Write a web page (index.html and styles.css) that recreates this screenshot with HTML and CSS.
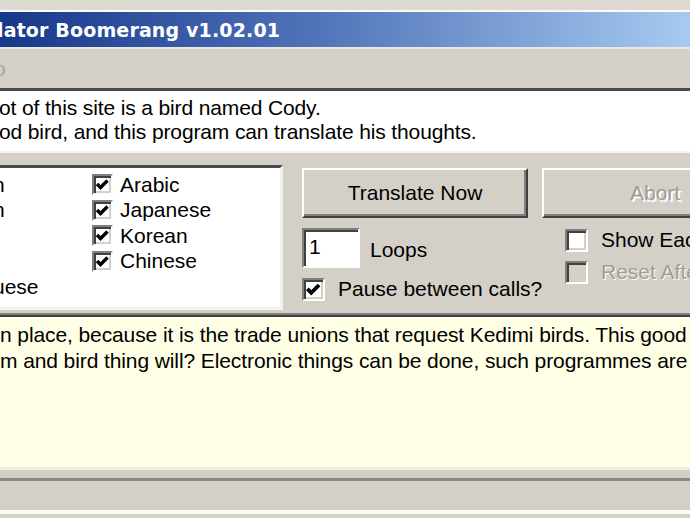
FILE: index.html
```html
<!DOCTYPE html>
<html lang="en">
<head>
  <meta charset="UTF-8">
  <meta name="viewport" content="width=device-width, initial-scale=1.0">
  <title>Translator Boomerang v1.02.01</title>
  <link rel="stylesheet" href="styles.css">
</head>
<body>

  <div class="window">
    <div class="frame-top"></div>

    <div class="titlebar">
      <span class="title">lator Boomerang v1.02.01</span>
    </div>

    <div class="menubar">
      <span class="menu-item">o</span>
    </div>

    <div class="intro">
      <div class="intro-line">ot of this site is a bird named Cody.</div>
      <div class="intro-line">od bird, and this program can translate his thoughts.</div>
    </div>

    <div class="controls">
      <div class="listbox">
        <div class="lang cut">n</div>
        <div class="lang cut">n</div>
        <div class="lang cut"></div>
        <div class="lang cut"></div>
        <div class="lang cut">uese</div>
        <div class="lang"><span class="box small checked"><svg viewBox="0 0 17 17"><path d="M3 8 L6.5 11.5 L13.5 4.5"/></svg></span>Arabic</div>
        <div class="lang"><span class="box small checked"><svg viewBox="0 0 17 17"><path d="M3 8 L6.5 11.5 L13.5 4.5"/></svg></span>Japanese</div>
        <div class="lang"><span class="box small checked"><svg viewBox="0 0 17 17"><path d="M3 8 L6.5 11.5 L13.5 4.5"/></svg></span>Korean</div>
        <div class="lang"><span class="box small checked"><svg viewBox="0 0 17 17"><path d="M3 8 L6.5 11.5 L13.5 4.5"/></svg></span>Chinese</div>
      </div>

      <div class="actions">
        <div class="col">
          <button class="btn">Translate Now</button>
          <div class="loops">
            <div class="edit">1</div>
            <span>Loops</span>
          </div>
          <div class="check pause"><span class="box checked"><svg viewBox="0 0 17 17"><path d="M3 8 L6.5 11.5 L13.5 4.5"/></svg></span>Pause between calls?</div>
        </div>
        <div class="col">
          <button class="btn" disabled>Abort</button>
          <div class="check opt show"><span class="box"></span>Show Each Result</div>
          <div class="check opt reset disabled"><span class="box"></span>Reset After Each</div>
        </div>
      </div>
    </div>

    <div class="output">
      <div>n place, because it is the trade unions that request Kedimi birds. This good</div>
      <div>m and bird thing will? Electronic things can be done, such programmes are</div>
    </div>

    <div class="status">
      <div class="status-bar"></div>
    </div>
  </div>

</body>
</html>
```

FILE: styles.css
```css
* {
  box-sizing: border-box;
}

body {
  margin: 0;
  font-family: "Liberation Sans", Arial, sans-serif;
  font-size: 21px;
  color: #000;
  background: #d4d0c8;
}

.window {
  width: 690px;
  height: 518px;
  overflow: hidden;
  display: flex;
  flex-direction: column;
  background: #d4d0c8;
  white-space: nowrap;
}

.frame-top {
  height: 12px;
  flex-shrink: 0;
  background: #dedad2;
  border-bottom: 2px solid #fbfaf6;
}

.titlebar {
  height: 35px;
  flex-shrink: 0;
  display: flex;
  align-items: center;
  background: linear-gradient(90deg, #17378a 0%, #4f72b8 45%, #a6caf0 100%);
  color: #fff;
}

.title {
  margin-left: -3px;
  font-family: "DejaVu Sans", Verdana, sans-serif;
  font-weight: bold;
  font-size: 19px;
  letter-spacing: 0.15px;
}

.menubar {
  height: 41px;
  flex-shrink: 0;
  border-top: 2px solid #ebe8e2;
  padding-top: 8px;
}

.menu-item {
  margin-left: -6px;
  color: #aaa69e;
}

.intro {
  height: 65px;
  flex-shrink: 0;
  background: #fff;
  border-top: 3px solid #4a4a4a;
  border-bottom: 2px solid #f4f2ee;
  padding-top: 5px;
  line-height: 24px;
  letter-spacing: -0.13px;
}

.intro-line {
  margin-left: -1px;
}

.controls {
  height: 160px;
  flex-shrink: 0;
  display: flex;
  gap: 19px;
  padding-top: 12px;
}

.listbox {
  width: 283px;
  height: 145px;
  flex-shrink: 0;
  background: #fff;
  border: 3px solid;
  border-color: #4a4a4a #f4f2ee #f4f2ee transparent;
  border-left: 0;
  padding-top: 4px;
  display: grid;
  grid-auto-flow: column;
  grid-template-columns: 92px auto;
  grid-template-rows: repeat(5, 25.5px);
}

.lang {
  display: flex;
  align-items: center;
}

.lang.cut {
  margin-left: -7px;
}

.box {
  width: 23px;
  height: 23px;
  flex-shrink: 0;
  margin-right: 13px;
  background: #fff;
  border: 2px solid;
  border-color: #808080 #fff #fff #808080;
  box-shadow: inset 2px 2px #404040, inset -2px -2px #d4d0c8;
}

.box.small {
  width: 21px;
  height: 21px;
  margin-right: 7px;
}

.box svg {
  display: block;
  width: 100%;
  height: 100%;
}

.box path {
  fill: none;
  stroke: #000;
  stroke-width: 3.4;
}

.actions {
  display: flex;
  gap: 14px;
  padding-top: 3px;
}

.col {
  width: 226px;
  flex-shrink: 0;
  display: flex;
  flex-direction: column;
}

.btn {
  width: 226px;
  height: 50px;
  font: inherit;
  color: #000;
  background: #d4d0c8;
  border: 2px solid;
  border-color: #fff #404040 #404040 #fff;
  box-shadow: inset -2px -2px #808080;
  padding: 0;
}

.btn:disabled {
  color: #a09d96;
  text-shadow: 2px 2px #fff;
}

.loops {
  display: flex;
  align-items: center;
  gap: 10px;
  margin-top: 10px;
}

.loops span {
  margin-top: 3px;
}

.edit {
  width: 58px;
  height: 40px;
  background: #fff;
  border: 2px solid;
  border-color: #808080 #fff #fff #808080;
  box-shadow: inset 2px 2px #404040;
  padding-left: 5px;
  line-height: 34px;
}

.check {
  display: flex;
  align-items: center;
}

.pause {
  margin-top: 9px;
}

.opt {
  margin-left: 23px;
}

.show {
  margin-top: 10px;
}

.reset {
  margin-top: 8px;
}

.disabled {
  color: #a09d96;
  text-shadow: 1px 1px #fff;
}

.disabled .box {
  background: #d4d0c8;
}

.output {
  height: 157px;
  flex-shrink: 0;
  background: #ffffe6;
  border-top: 2px solid #808080;
  border-bottom: 3px solid #eeece6;
  box-shadow: inset 0 2px #404040;
  padding-top: 7px;
  line-height: 25.5px;
  letter-spacing: -0.1px;
}

.status {
  flex: 1;
  padding-top: 8px;
}

.status-bar {
  height: 36px;
  border-top: 3px solid #8a8780;
  border-bottom: 4px solid #fbfaf6;
}
```
